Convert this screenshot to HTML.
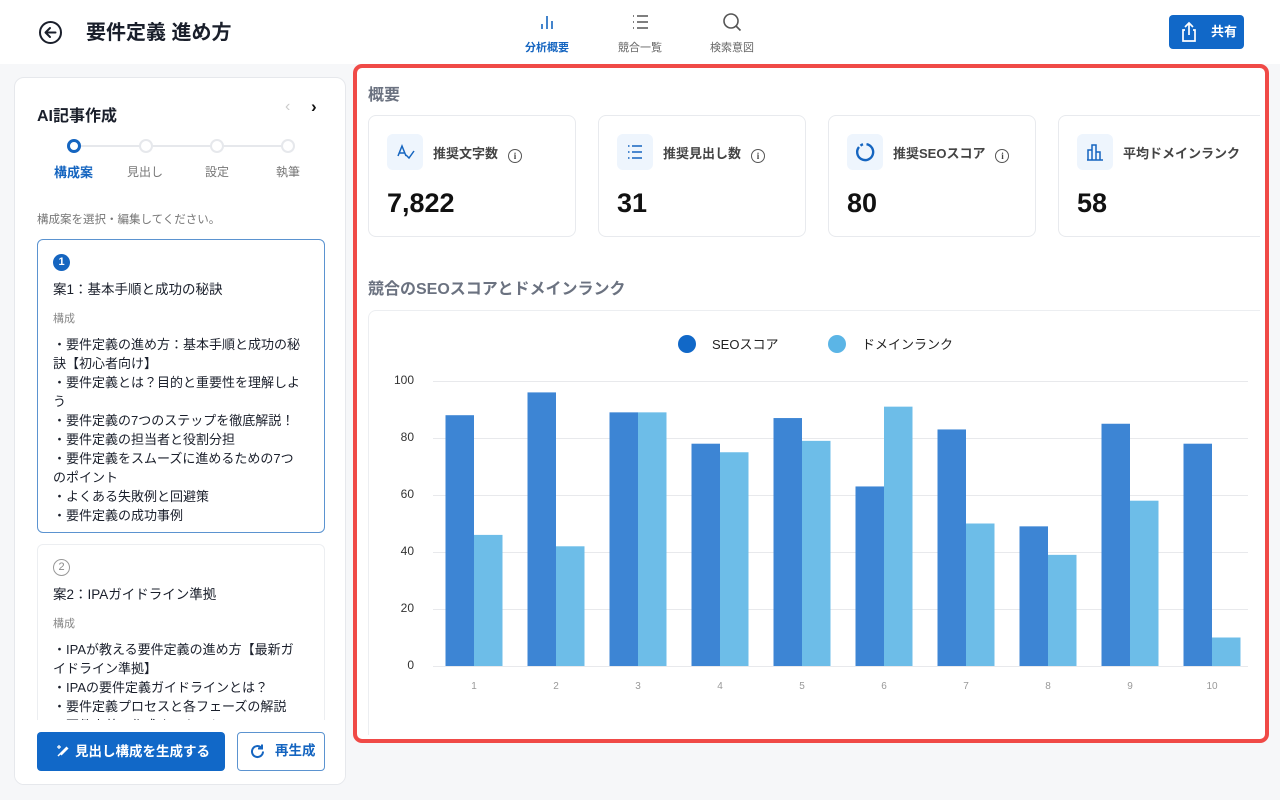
<!DOCTYPE html>
<html><head><meta charset="utf-8"><style>
*{box-sizing:border-box;margin:0;padding:0}
body{width:1280px;height:800px;overflow:hidden;background:#f6f7f9;font-family:"Liberation Sans","Noto Sans CJK JP",sans-serif;color:#1a1f2b;position:relative}
.abs{position:absolute}
.hdr{left:0;top:0;width:1280px;height:64px;background:#fff}
.tab{position:absolute;top:12px;width:70px;text-align:center;font-size:11px;color:#666}
.lp{left:14px;top:77px;width:332px;height:708px;background:#fff;border:1px solid #e6e8ec;border-radius:10px;overflow:hidden}
.card{position:absolute;left:22px;width:288px;border-radius:6px;background:#fff;padding:14px 15px;font-size:13px;line-height:19px;white-space:nowrap}
.card .t{margin-top:9px;font-size:13.5px}
.card .k{font-size:11px;color:#888;margin:11px 0 6px}
.stat{position:absolute;top:115px;width:208px;height:122px;background:#fff;border:1px solid #e8eaee;border-radius:8px}
.ic{position:absolute;left:18px;top:18px;width:36px;height:36px;background:#eef5fd;border-radius:6px}
.sl{position:absolute;left:64px;top:27px;font-size:13px;color:#444;font-weight:bold;white-space:nowrap}
.sv{position:absolute;left:18px;top:72px;font-size:27px;font-weight:bold;color:#111}
.info{display:inline-block;width:14px;height:14px;border:1.3px solid #555;border-radius:50%;font-size:9px;text-align:center;line-height:12px;margin-left:10px;vertical-align:-1px;font-weight:bold;font-family:"Liberation Serif",serif}
</style></head><body>
<div class="abs hdr"></div>
<svg class="abs" style="left:38px;top:20px" width="25" height="25" viewBox="0 0 25 25"><circle cx="12.5" cy="12.5" r="10.5" fill="none" stroke="#1a1f2b" stroke-width="2"/><path d="M17.5 12.5H8M12 8l-4.5 4.5L12 17" fill="none" stroke="#1a1f2b" stroke-width="2" stroke-linecap="round" stroke-linejoin="round"/></svg>
<div class="abs" style="left:86px;top:16px;font-size:20px;font-weight:bold">要件定義 進め方</div>
<div class="tab" style="left:512px;color:#1565c0;font-weight:bold"><svg width="20" height="20" viewBox="0 0 20 20"><path d="M5 12v5M10 4v13M15 9v8" stroke="#1565c0" stroke-width="1.6"/></svg><div style="margin-top:4px">分析概要</div></div>
<div class="tab" style="left:605px"><svg width="20" height="20" viewBox="0 0 20 20"><path d="M3 4h1M3 10h1M3 16h1M7 4h11M7 10h11M7 16h11" stroke="#555" stroke-width="1.5"/></svg><div style="margin-top:4px">競合一覧</div></div>
<div class="tab" style="left:697px"><svg width="20" height="20" viewBox="0 0 20 20"><circle cx="9" cy="9" r="7" fill="none" stroke="#555" stroke-width="1.6"/><path d="M14 14l4.5 4.5" stroke="#555" stroke-width="1.6"/></svg><div style="margin-top:4px">検索意図</div></div>
<div class="abs" style="left:1169px;top:15px;width:75px;height:34px;background:#1168c8;border-radius:4px;color:#fff;font-size:13px;font-weight:bold;line-height:34px;padding-left:42px">共有</div>
<svg class="abs" style="left:1180px;top:21px" width="18" height="22" viewBox="0 0 18 22"><path d="M9 2v12M5 6l4-4 4 4M5 9H3v11h12V9h-2" fill="none" stroke="#fff" stroke-width="1.7"/></svg>

<div class="abs lp">
<div class="abs" style="left:22px;top:24px;font-size:16px;font-weight:bold">AI記事作成</div>
<div class="abs" style="left:270px;top:20px;color:#ccc;font-size:16px">‹</div>
<div class="abs" style="left:296px;top:19px;color:#111;font-size:17px;font-weight:bold">›</div>
<div class="abs" style="left:60px;top:67px;width:214px;height:2px;background:#e6e8ec"></div>
<div class="abs" style="left:52px;top:61px;width:14px;height:14px;border:3px solid #1565c0;border-radius:50%;background:#fff"></div>
<div class="abs" style="left:124px;top:61px;width:14px;height:14px;border:2px solid #e6e8ec;border-radius:50%;background:#fff"></div>
<div class="abs" style="left:195px;top:61px;width:14px;height:14px;border:2px solid #e6e8ec;border-radius:50%;background:#fff"></div>
<div class="abs" style="left:266px;top:61px;width:14px;height:14px;border:2px solid #e6e8ec;border-radius:50%;background:#fff"></div>
<div class="abs" style="left:39px;top:84px;font-size:13px;color:#1565c0;font-weight:bold">構成案</div>
<div class="abs" style="left:112px;top:85px;font-size:12px;color:#777">見出し</div>
<div class="abs" style="left:190px;top:85px;font-size:12px;color:#777">設定</div>
<div class="abs" style="left:261px;top:85px;font-size:12px;color:#777">執筆</div>
<div class="abs" style="left:22px;top:133px;font-size:11.5px;color:#777">構成案を選択・編集してください。</div>
<div class="card" style="top:161px;height:294px;border:1.5px solid #5b93d0">
<div style="width:17px;height:17px;border-radius:50%;background:#1565c0;color:#fff;font-size:11px;text-align:center;line-height:17px;font-weight:bold">1</div>
<div class="t">案1：基本手順と成功の秘訣</div>
<div class="k">構成</div>
<div>・要件定義の進め方：基本手順と成功の秘<br>訣【初心者向け】<br>・要件定義とは？目的と重要性を理解しよ<br>う<br>・要件定義の7つのステップを徹底解説！<br>・要件定義の担当者と役割分担<br>・要件定義をスムーズに進めるための7つ<br>のポイント<br>・よくある失敗例と回避策<br>・要件定義の成功事例</div>
</div>
<div class="card" style="top:466px;height:240px;border:1px solid #eceef1">
<div style="width:17px;height:17px;border-radius:50%;border:1px solid #999;color:#888;font-size:11px;text-align:center;line-height:15px">2</div>
<div class="t">案2：IPAガイドライン準拠</div>
<div class="k">構成</div>
<div>・IPAが教える要件定義の進め方【最新ガ<br>イドライン準拠】<br>・IPAの要件定義ガイドラインとは？<br>・要件定義プロセスと各フェーズの解説<br>・要件定義で作成すべきドキュメント</div>
</div>
<div class="abs" style="left:0;top:642px;width:332px;height:66px;background:#fff"></div>
<div class="abs" style="left:22px;top:654px;width:188px;height:39px;background:#1168c8;border-radius:4px;color:#fff;font-size:13.5px;font-weight:bold;line-height:39px;padding-left:38px">見出し構成を生成する</div>
<svg class="abs" style="left:40px;top:665px" width="16" height="16" viewBox="0 0 16 16"><path d="M3 13L12 4M6 12l7-7" stroke="#fff" stroke-width="1.5"/><path d="M4 2v4M2 4h4" stroke="#fff" stroke-width="1.2"/></svg>
<div class="abs" style="left:222px;top:654px;width:88px;height:39px;border:1.5px solid #5b93d0;border-radius:4px;color:#1565c0;font-size:13.5px;font-weight:bold;line-height:36px;padding-left:37px">再生成</div>
<svg class="abs" style="left:234px;top:665px" width="17" height="17" viewBox="0 0 17 17"><path d="M14 8.5A5.5 5.5 0 1 1 12 4.3" fill="none" stroke="#1565c0" stroke-width="2"/><path d="M13 1.5v4h-4" fill="none" stroke="#1565c0" stroke-width="2"/></svg>
</div>

<div class="abs" style="left:353px;top:64px;width:916px;height:679px;border:4px solid #f04a47;border-radius:9px;background:#fff;overflow:hidden">
<div class="abs" style="left:11px;top:13px;font-size:16px;font-weight:bold;color:#6b7280">概要</div>
<div class="abs" style="left:11px;top:207px;font-size:16px;font-weight:bold;color:#6b7280">競合のSEOスコアとドメインランク</div>
</div>
<div class="stat" style="left:368px"><div class="ic"><svg width="36" height="36" viewBox="0 0 36 36"><path d="M11 22l4-10 4 10M12.5 19h5M19 21l3 3 5-7" fill="none" stroke="#1565c0" stroke-width="1.5"/></svg></div><div class="sl">推奨文字数<span class="info">i</span></div><div class="sv">7,822</div></div>
<div class="stat" style="left:598px"><div class="ic"><svg width="36" height="36" viewBox="0 0 36 36"><path d="M11 12h1.5M11 18h1.5M11 24h1.5M15 12h10M15 18h10M15 24h10" stroke="#1565c0" stroke-width="1.6"/></svg></div><div class="sl">推奨見出し数<span class="info">i</span></div><div class="sv">31</div></div>
<div class="stat" style="left:828px"><div class="ic"><svg width="36" height="36" viewBox="0 0 36 36"><path d="M19.5 10.2A8 8 0 1 1 12 13" fill="none" stroke="#1565c0" stroke-width="2.4"/><path d="M16 10.3a8 8 0 0 0-2.5 1.4" fill="none" stroke="#1565c0" stroke-width="2.4"/></svg></div><div class="sl">推奨SEOスコア<span class="info">i</span></div><div class="sv">80</div></div>
<div class="stat" style="left:1058px;width:202px;border-right:none;border-radius:8px 0 0 8px"><div class="ic"><svg width="36" height="36" viewBox="0 0 36 36"><path d="M10 26h16M11 26V16h4v10M15 26V11h4v15M19 26v-8h4v8" fill="none" stroke="#1565c0" stroke-width="1.5"/></svg></div><div class="sl">平均ドメインランク</div><div class="sv">58</div></div>
<div class="abs" style="left:368px;top:310px;width:892px;height:425px;border:1px solid #eceef1;border-right:none;border-bottom:none;border-radius:8px 0 0 0"></div>
<svg class="abs" style="left:368px;top:320px" width="892" height="400" viewBox="368 320 892 400" font-family="Liberation Sans, Noto Sans CJK JP, sans-serif">
<circle cx="687" cy="344" r="9" fill="#1168c8"/><text x="712" y="349" font-size="13" fill="#222">SEOスコア</text>
<circle cx="837" cy="344" r="9" fill="#5bb5e6"/><text x="862" y="349" font-size="13" fill="#222">ドメインランク</text>
<g stroke="#e8e9ec" stroke-width="1">
<line x1="433" y1="381.5" x2="1248" y2="381.5"/><line x1="433" y1="438.5" x2="1248" y2="438.5"/><line x1="433" y1="495.5" x2="1248" y2="495.5"/><line x1="433" y1="552.5" x2="1248" y2="552.5"/><line x1="433" y1="609.5" x2="1248" y2="609.5"/><line x1="433" y1="666.5" x2="1248" y2="666.5"/></g>
<g font-size="12" fill="#333" text-anchor="end"><text x="414" y="384">100</text><text x="414" y="441">80</text><text x="414" y="498">60</text><text x="414" y="555">40</text><text x="414" y="612">20</text><text x="414" y="669">0</text></g>
<g id="bars"></g>
<g font-size="10" fill="#999" text-anchor="middle" id="xl"></g>
</svg>
<script>
var d=[88,96,89,78,87,63,83,49,85,78],l=[46,42,89,75,79,91,50,39,58,10],s='',t='';
for(var i=0;i<10;i++){var c=474+82*i;
s+='<rect x="'+(c-28.5)+'" y="'+(666-d[i]*2.85)+'" width="28.5" height="'+(d[i]*2.85)+'" fill="#3d85d4"/>';
s+='<rect x="'+c+'" y="'+(666-l[i]*2.85)+'" width="28.5" height="'+(l[i]*2.85)+'" fill="#6dbde8"/>';
t+='<text x="'+c+'" y="689">'+(i+1)+'</text>';}
document.getElementById('bars').innerHTML=s;document.getElementById('xl').innerHTML=t;
</script>
</body></html>
